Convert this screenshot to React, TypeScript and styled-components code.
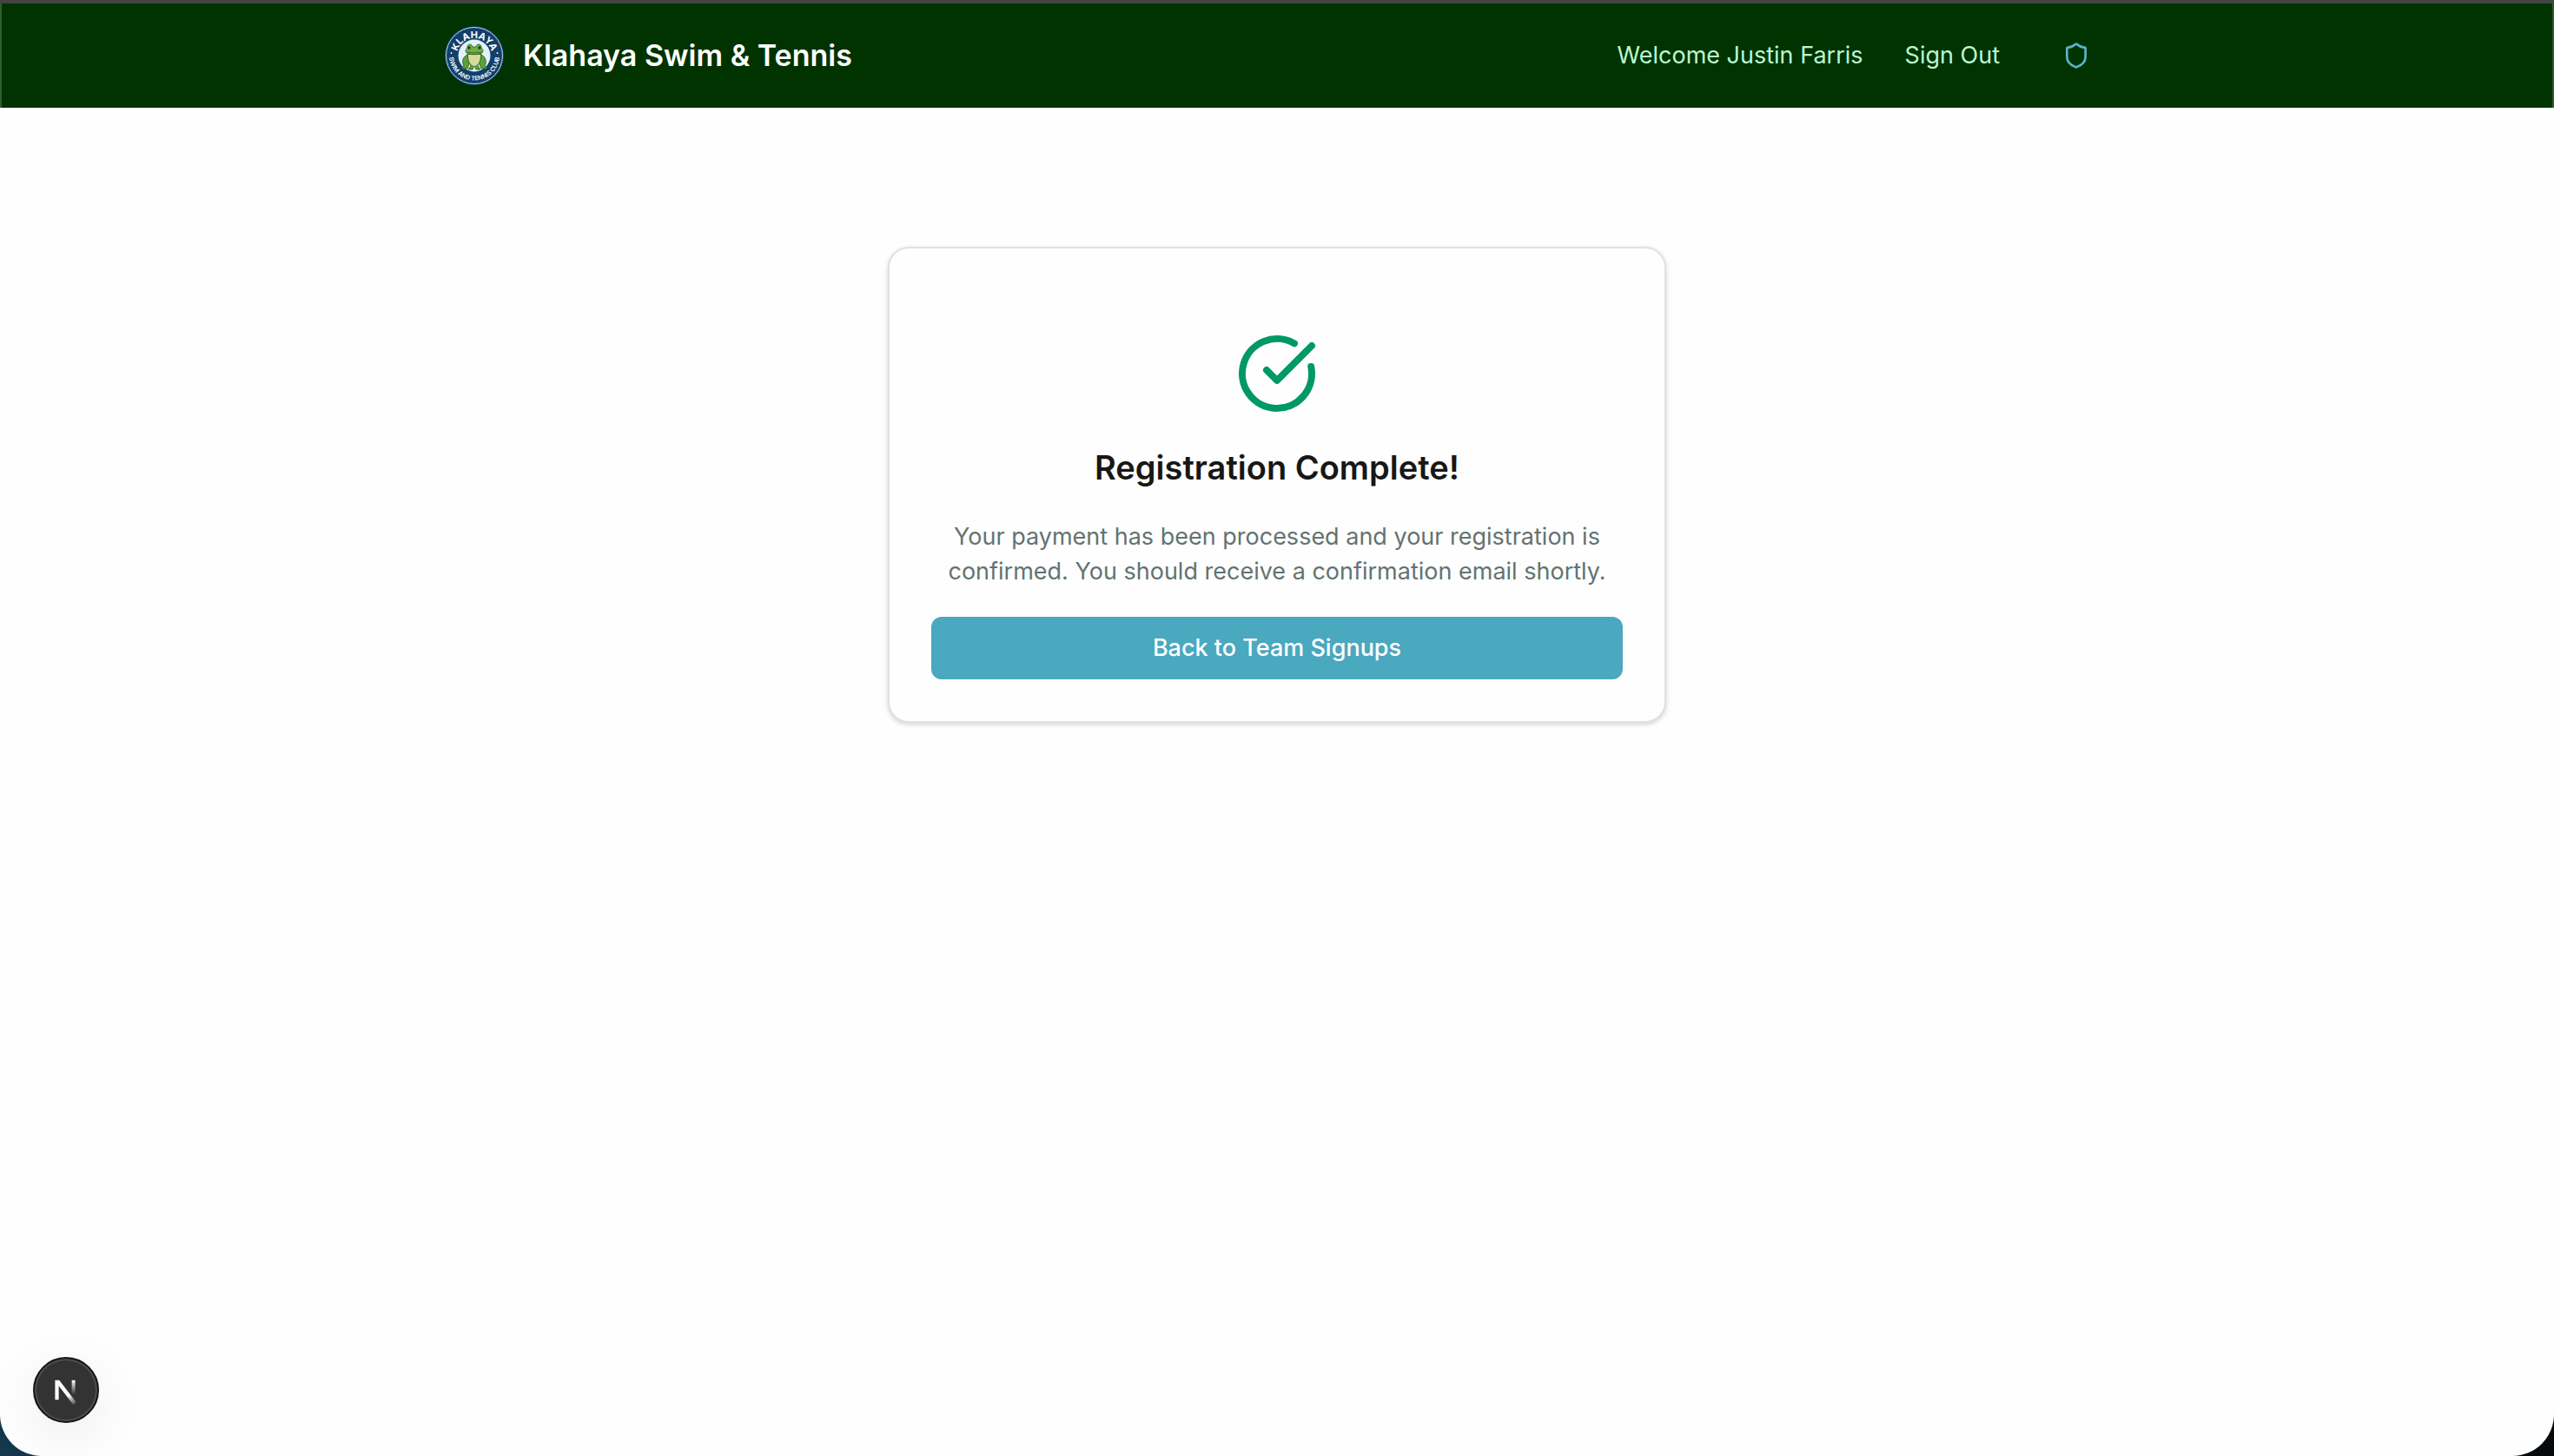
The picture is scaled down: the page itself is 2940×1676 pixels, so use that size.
import React from "react";
import styled, { createGlobalStyle } from "styled-components";
import { CircleCheckBig, Shield } from "lucide-react";

const GlobalStyle = createGlobalStyle`
  *, *::before, *::after { box-sizing: border-box; }
  body {
    margin: 0;
    background: linear-gradient(90deg, #14384c 0, #05090c 50%, #05090c 100%);
    font-family: Inter, "Liberation Sans", sans-serif;
    -webkit-font-smoothing: antialiased;
  }
`;

const Page = styled.div`
  min-height: 100vh;
  display: flex;
  flex-direction: column;
  background: #fefefe;
  border-top: 4px solid #444444;
  border-radius: 0 0 48px 48px;
  overflow: hidden;
`;

const Header = styled.header`
  background: #003300;
  border: solid #305c30;
  border-width: 0 2px;
`;

const HeaderInner = styled.div`
  display: flex;
  align-items: center;
  justify-content: space-between;
  max-width: 1920px;
  height: 120px;
  margin: 0 auto;
`;

const Brand = styled.a`
  display: flex;
  align-items: center;
  gap: 20px;
  color: #ffffff;
  font-size: 34px;
  font-weight: 600;
  line-height: 48px;
  text-decoration: none;
`;

const Crest = styled.svg`
  width: 72px;
  height: 72px;
`;

const Nav = styled.nav`
  display: flex;
  align-items: center;
  gap: 48px;
  color: #b9f8cf;
  font-size: 27px;
  line-height: 40px;
`;

const TextButton = styled.button`
  padding: 0;
  border: 0;
  background: none;
  color: inherit;
  font: inherit;
  cursor: pointer;
`;

const IconButton = styled.button`
  display: flex;
  align-items: center;
  justify-content: center;
  width: 80px;
  height: 72px;
  padding: 0;
  border: 0;
  background: none;
  color: #5cb3cc;
  cursor: pointer;
`;

const Main = styled.main`
  flex: 1;
  padding: 160px 32px 64px;
`;

const Card = styled.section`
  display: flex;
  flex-direction: column;
  align-items: center;
  max-width: 896px;
  margin: 0 auto;
  padding: 96px 48px 48px;
  border: 2px solid #dce4e3;
  border-radius: 24px;
  background: #fefefe;
  box-shadow: 0 2px 6px rgba(0, 0, 0, 0.1), 0 2px 4px rgba(0, 0, 0, 0.08);
  text-align: center;
`;

const CardTitle = styled.h1`
  margin: 32px 0;
  color: #171717;
  font-size: 38px;
  font-weight: 600;
  line-height: 56px;
`;

const Message = styled.p`
  margin: 0 0 32px;
  color: #637371;
  font-size: 27px;
  line-height: 40px;
`;

const PrimaryLink = styled.a`
  width: 100%;
  padding: 16px 32px;
  border-radius: 12px;
  background: #4aa8bf;
  color: #ffffff;
  font-size: 27px;
  font-weight: 500;
  line-height: 40px;
  text-decoration: none;
`;

const DevBadge = styled.button`
  position: fixed;
  left: 38px;
  bottom: 38px;
  display: flex;
  align-items: center;
  justify-content: center;
  width: 76px;
  height: 76px;
  padding: 0;
  border: 2px solid #171717;
  border-radius: 50%;
  background: #333333;
  box-shadow: inset 0 0 0 2px #4d4d4d, 0 16px 64px rgba(0, 0, 0, 0.08);
  cursor: pointer;
`;

const BadgeMark = styled.svg`
  flex: none;
  width: 80px;
  height: 80px;
`;

function ClubCrest() {
  return (
    <Crest viewBox="0 0 72 72" aria-hidden="true">
      <defs>
        <path id="crest-top" d="M16 36 A20 20 0 0 1 56 36" />
        <path id="crest-bottom" d="M8 28 A29 29 0 1 0 64 28" />
      </defs>
      <circle cx="36" cy="36" r="34" fill="#10406b" />
      <circle cx="36" cy="36" r="32.5" fill="none" stroke="#c4d9e6" strokeWidth="1" />
      <circle cx="36" cy="36" r="18.5" fill="#e2f3f8" />
      <g fill="#ffffff" fontFamily="Inter, sans-serif" textAnchor="middle">
        <text fontSize="11" fontWeight="700">
          <textPath href="#crest-top" startOffset="50%">KLAHAYA</textPath>
        </text>
        <text fontSize="7" fontWeight="600">
          <textPath href="#crest-bottom" startOffset="50%">SWIM AND TENNIS CLUB</textPath>
        </text>
      </g>
      <circle cx="9.5" cy="33" r="0.9" fill="#ffffff" />
      <circle cx="62.5" cy="33" r="0.9" fill="#ffffff" />
      <g stroke="#2c5a2a" strokeWidth="0.8" strokeLinejoin="round">
        <path d="M29 35 C23 36 21 43 24 48 L21 51 H28 L30 46 Z" fill="#5f9f3a" />
        <path d="M43 35 C49 36 51 43 48 48 L51 51 H44 L42 46 Z" fill="#5f9f3a" />
        <path d="M28 34 C28 42 31 45 32 48 L29 52 H34 L36 47 L38 52 H43 L40 48 C41 45 44 42 44 34 Z" fill="#5f9f3a" />
        <path d="M29 35 H43 C43 42 41 47 36 48 C31 47 29 42 29 35 Z" fill="#d6dc98" stroke="none" />
        <path d="M26 31 C26 29 27 28 28 27 C27 22 34 22 34 26 H38 C38 22 45 22 44 27 C45 28 46 29 46 31 C46 36 26 36 26 31 Z" fill="#6fb043" />
        <path d="M28 32 Q36 34 44 32" fill="none" />
      </g>
      <circle cx="30" cy="27" r="1.7" fill="#1d3a24" />
      <circle cx="42" cy="27" r="1.7" fill="#1d3a24" />
    </Crest>
  );
}

function NextMark() {
  return (
    <BadgeMark viewBox="0 0 40 40" aria-hidden="true">
      <defs>
        <linearGradient id="mark-diagonal" gradientUnits="userSpaceOnUse" x1="21.5" y1="23" x2="26" y2="28.8">
          <stop stopColor="#ffffff" />
          <stop offset="1" stopColor="#ffffff" stopOpacity="0" />
        </linearGradient>
        <linearGradient id="mark-stem" gradientUnits="userSpaceOnUse" x1="24" y1="14.4" x2="24" y2="22.6">
          <stop stopColor="#ffffff" />
          <stop offset="1" stopColor="#ffffff" stopOpacity="0" />
        </linearGradient>
      </defs>
      <path d="M13.7 14.4 H16.1 L26 27.2 L24.2 28.5 L15.8 17.6 V25.6 H13.7 Z" fill="url(#mark-diagonal)" />
      <path d="M23.3 14.4 H25.3 V23 H23.3 Z" fill="url(#mark-stem)" />
    </BadgeMark>
  );
}

export default function App() {
  return (
    <>
      <GlobalStyle />
      <Page>
        <Header>
          <HeaderInner>
            <Brand href="#">
              <ClubCrest />
              <span>Klahaya Swim &amp; Tennis</span>
            </Brand>
            <Nav>
              <span>Welcome Justin Farris</span>
              <TextButton type="button">Sign Out</TextButton>
              <IconButton type="button" aria-label="Admin">
                <Shield size={32} />
              </IconButton>
            </Nav>
          </HeaderInner>
        </Header>
        <Main>
          <Card>
            <CircleCheckBig size={96} color="#009966" aria-hidden="true" />
            <CardTitle>Registration Complete!</CardTitle>
            <Message>
              Your payment has been processed and your registration is confirmed. You should receive a
              confirmation email shortly.
            </Message>
            <PrimaryLink href="#">Back to Team Signups</PrimaryLink>
          </Card>
        </Main>
      </Page>
      <DevBadge type="button" aria-label="Open developer tools">
        <NextMark />
      </DevBadge>
    </>
  );
}
